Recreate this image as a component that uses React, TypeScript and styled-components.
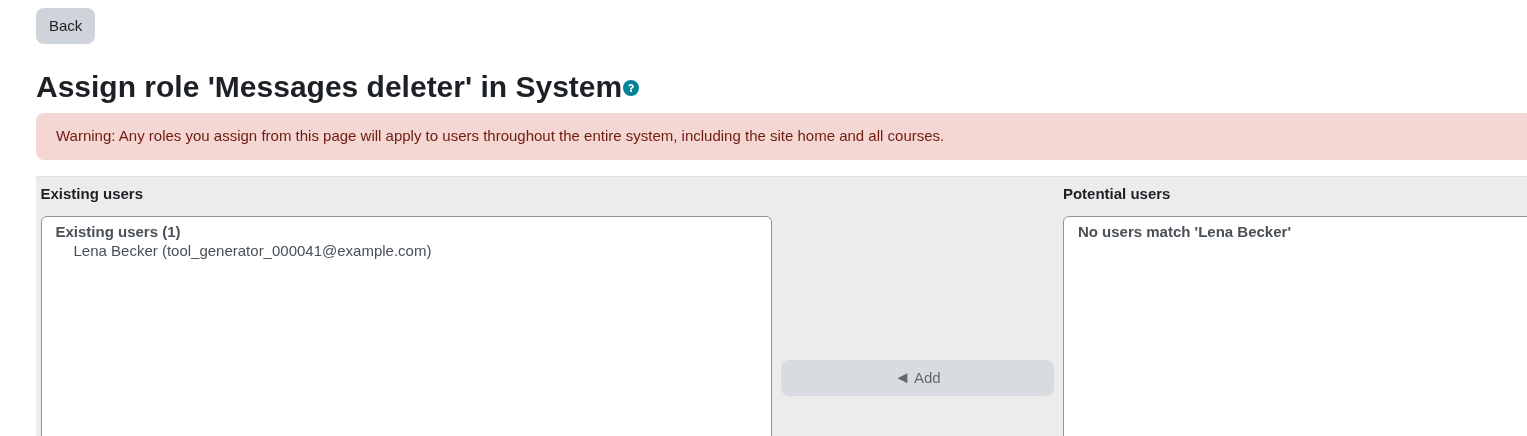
import React from "react";
import styled, { createGlobalStyle } from "styled-components";
import { FaQuestion } from "react-icons/fa";

const Global = createGlobalStyle`
  html, body { margin: 0; padding: 0; background: #fff; overflow: hidden; }
  body { font-family: "Liberation Sans", Arial, sans-serif; font-size: 15px; line-height: 1.5; color: #1d2125; }
`;
const Page = styled.div`
  width: 1527px; height: 436px; overflow: hidden; padding: 8px 0 0 36px; box-sizing: border-box; will-change: transform;
`;
const BackButton = styled.button`
  display: block; height: 36px; padding: 0 13px; border: 0; border-radius: 8px; background: #ced4da;
  color: #1d2125; font: 15px/22px "Liberation Sans", Arial, sans-serif;
`;
const Title = styled.h2`
  display: flex; align-items: center; margin: 24px 0 0; height: 37px;
  font-size: 30px; line-height: 37px; font-weight: 700; color: #1d2125;
`;
const HelpBadge = styled.span`
  display: flex; align-items: center; justify-content: center; flex: none;
  width: 16px; height: 16px; margin: 3px 0 0 1px; border-radius: 50%; background: #008196; color: #fff;
`;
const HelpGlyph = styled(FaQuestion)`
  width: 8px; height: 8px;
`;
const Alert = styled.div`
  box-sizing: border-box; height: 47px; margin-top: 8px; padding: 12px 20px; border-radius: 8px 0 0 8px;
  background: #f4d6d2; color: #6e1b12; line-height: 22.5px;
`;
const Selector = styled.div`
  display: grid; grid-template-columns: 1022.4px 1fr; height: 260px; margin-top: 16px; padding-left: 4.5px;
  border-top: 1px solid #dee2e6; background: #ececec;
`;
const Column = styled.div`
  display: flex; flex-direction: column; min-width: 0;
`;
const Heading = styled.div`
  height: 39px; line-height: 33px; font-weight: 700; color: #1d2125;
`;
const ListRow = styled.div`
  display: flex; padding-left: 0.5px;
`;
const ListBox = styled.div`
  box-sizing: border-box; width: 731px; height: 300px; flex: none;
  padding: 5px 0 0 13.5px; background: #fff; border: 1px solid #8f959e; border-radius: 6px 6px 0 0;
  color: #495057; line-height: 19px;
`;
const GroupLabel = styled.div`
  font-weight: 700;
`;
const Option = styled.div`
  padding-left: 18px;
`;
const Controls = styled.div`
  flex: 1; display: flex; padding: 144px 0 0 9px;
`;
const AddButton = styled.button`
  width: 273px; height: 36px; border: 0; border-radius: 8px; background: #ced4da; color: #1d2125; opacity: 0.65;
  font: 15px/22px "Liberation Sans", Arial, sans-serif;
`;
const AddArrow = styled.span`
  font-size: 16.5px; line-height: 1;
`;

export default function App() {
  return (
    <Page>
      <Global />
      <BackButton>Back</BackButton>
      <Title>Assign role 'Messages deleter' in System<HelpBadge><HelpGlyph /></HelpBadge></Title>
      <Alert>Warning: Any roles you assign from this page will apply to users throughout the entire system, including the site home and all courses.</Alert>
      <Selector>
        <Column>
          <Heading>Existing users</Heading>
          <ListRow>
            <ListBox>
              <GroupLabel>Existing users (1)</GroupLabel>
              <Option>Lena Becker (tool_generator_000041@example.com)</Option>
            </ListBox>
            <Controls><AddButton><AddArrow>◄</AddArrow> Add</AddButton></Controls>
          </ListRow>
        </Column>
        <Column>
          <Heading>Potential users</Heading>
          <ListRow>
            <ListBox>
              <GroupLabel>No users match 'Lena Becker'</GroupLabel>
            </ListBox>
          </ListRow>
        </Column>
      </Selector>
    </Page>
  );
}
